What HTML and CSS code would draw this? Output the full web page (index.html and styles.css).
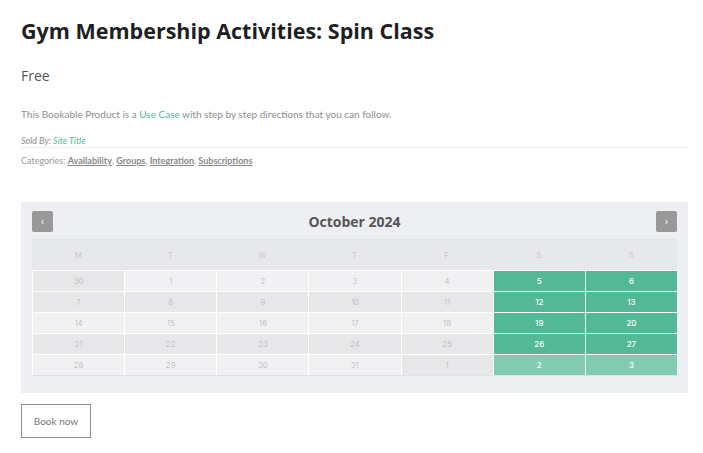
FILE: index.html
```html
<!DOCTYPE html>
<html>
<head>
<meta charset="utf-8">
<link rel="stylesheet" href="styles.css">
</head>
<body>
<div class="page">
  <h1 class="title">Gym Membership Activities: Spin Class</h1>
  <p class="price">Free</p>
  <p class="desc">This Bookable Product is a <a class="green" href="#">Use Case</a> with step by step directions that you can follow.</p>
  <p class="sold">Sold By: <a class="green" href="#">Site Title</a></p>
  <p class="cats">Categories: <a href="#">Availability</a>, <a href="#">Groups</a>, <a href="#">Integration</a>, <a href="#">Subscriptions</a></p>

  <div class="cal">
    <div class="cal-head">
      <button class="nav">&#8249;</button>
      <div class="month">October 2024</div>
      <button class="nav">&#8250;</button>
    </div>
    <div class="grid">
      <div class="wd">M</div><div class="wd">T</div><div class="wd">W</div><div class="wd">T</div><div class="wd">F</div><div class="wd">S</div><div class="wd">S</div>

      <div class="d other">30</div><div class="d">1</div><div class="d">2</div><div class="d">3</div><div class="d">4</div><div class="d av">5</div><div class="d av">6</div>

      <div class="d dk">7</div><div class="d dk">8</div><div class="d dk">9</div><div class="d dk">10</div><div class="d dk">11</div><div class="d av">12</div><div class="d av">13</div>

      <div class="d">14</div><div class="d">15</div><div class="d">16</div><div class="d">17</div><div class="d">18</div><div class="d av">19</div><div class="d av">20</div>

      <div class="d dk">21</div><div class="d dk">22</div><div class="d dk">23</div><div class="d dk">24</div><div class="d dk">25</div><div class="d av">26</div><div class="d av">27</div>

      <div class="d">28</div><div class="d">29</div><div class="d">30</div><div class="d">31</div><div class="d other">1</div><div class="d av lt">2</div><div class="d av lt">3</div>
    </div>
  </div>

  <button class="book">Book now</button>
</div>
</body>
</html>
```

FILE: styles.css
```css
* { box-sizing: border-box; }
html, body { margin: 0; padding: 0; background: #fff; }
.page {
  padding: 17px 15px 0 21px;
  font-family: "Lato", "Liberation Sans", sans-serif;
  color: #999;
}
.title {
  margin: 0;
  font-family: "Open Sans", sans-serif;
  font-weight: 700;
  font-size: 21.5px;
  line-height: 28px;
  color: #1e1f24;
}
.price {
  margin: 22px 0 0;
  font-size: 14px;
  line-height: 18px;
  color: #555;
  font-family: "Open Sans", sans-serif;
}
.desc {
  margin: 22px 0 0;
  font-size: 10px;
  line-height: 14px;
  color: #8d8d8d;
}
.green { color: #52b896; text-decoration: none; }
.sold {
  margin: 14px 0 0;
  font-size: 9px;
  line-height: 12px;
  font-style: italic;
  color: #8d8d8d;
  padding-bottom: 0;
  border-bottom: 1px solid #eeeeee;
}
.cats {
  margin: 7px 0 0;
  font-size: 9px;
  line-height: 12px;
  color: #999;
}
.cats a { color: #888; font-weight: 700; text-decoration: underline; }

.cal {
  margin-top: 35px;
  background: #eeeff2;
  padding: 9px 11px 17px;
}
.cal-head {
  display: flex;
  align-items: center;
  justify-content: space-between;
  height: 29px;
  padding-bottom: 8px;
  border-bottom: 1px solid #e1e2e6;
}
.nav {
  width: 21px;
  height: 21px;
  border: none;
  border-radius: 2px;
  background: #999999;
  color: #fff;
  font-size: 10px;
  padding: 0;
  line-height: 21px;
  font-family: "Open Sans", sans-serif;
}
.month {
  font-family: "Open Sans", sans-serif;
  font-weight: 700;
  font-size: 14px;
  color: #555;
}
.grid {
  display: grid;
  grid-template-columns: repeat(7, 1fr);
  grid-template-rows: 30px;
  grid-auto-rows: 21px;
  border-bottom: 1px solid #e1e2e6;
  font-family: "Inter", sans-serif;
  font-weight: 300;
  font-size: 8px;
}
.wd {
  background: #e7e8eb;
  color: #bdbdc0;
  display: flex;
  align-items: center;
  justify-content: center;
}
.d {
  display: flex;
  align-items: center;
  justify-content: center;
  background: #f1f1f3;
  color: #b5b5b8;
  border-left: 1px solid #ffffff;
  border-top: 1px solid #ffffff;
}
.d.dk, .d.other { background: #e7e7ea; }
.d.av {
  background: #52b896;
  color: #fff;
  font-weight: 500;
}
.d.av.lt { background: #84cab0; }

.book {
  margin-top: 11px;
  width: 70px;
  height: 34px;
  background: #fff;
  border: 1px solid #8f8f8f;
  color: #777;
  font-family: "Lato", sans-serif;
  font-size: 10px;
  padding: 0;
}
```
